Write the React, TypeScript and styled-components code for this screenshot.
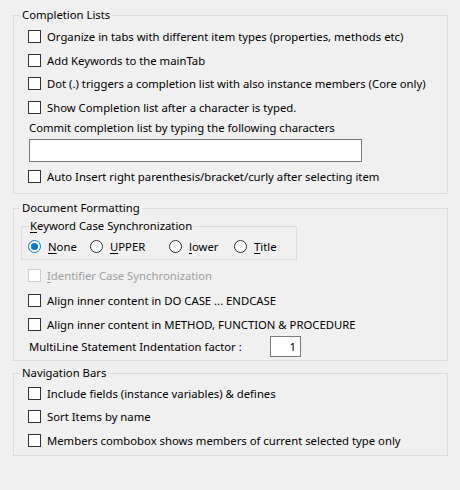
import React from 'react';
import styled, { createGlobalStyle } from 'styled-components';

const GlobalStyle = createGlobalStyle`
  html, body {
    margin: 0;
    padding: 0;
    background: #f0f0f0;
  }
  body {
    font-family: 'Noto Sans', 'Open Sans', sans-serif;
    font-size: 11.3px;
    color: #000;
  }
`;

const Page = styled.div`
  width: 460px;
  height: 490px;
  padding: 8px 12px 0 13px;
  box-sizing: border-box;
  display: flex;
  flex-direction: column;
`;

const Group = styled.fieldset<{ pad: string; top: number }>`
  margin: ${p => p.top}px 0 0 0;
  border: 1px solid #dcdcdc;
  padding: ${p => p.pad};
  display: flex;
  flex-direction: column;
  min-width: 0;
`;

const Legend = styled.legend`
  padding: 0 2px;
  margin-left: -8px;
  height: 14px;
  line-height: 14px;
`;

const InnerGroup = styled.fieldset`
  margin: 4px 0 0 -7px;
  width: 276px;
  box-sizing: border-box;
  border: 1px solid #dcdcdc;
  padding: 1px 0 1px 6px;
  display: flex;
  align-items: center;
`;

const InnerLegend = styled.legend`
  padding: 0 1px;
  margin-left: 1px;
  height: 14px;
  line-height: 14px;
`;

const Row = styled.label<{ h?: number; disabled?: boolean; top?: number }>`
  display: flex;
  align-items: center;
  height: ${p => p.h || 23.5}px;
  margin-top: ${p => p.top || 0}px;
  gap: 6px;
  color: ${p => (p.disabled ? '#a0a0a0' : '#000')};
  white-space: nowrap;
`;

const Box = styled.span<{ disabled?: boolean }>`
  width: 13px;
  height: 13px;
  box-sizing: border-box;
  border: 1px solid ${p => (p.disabled ? '#cccccc' : '#333333')};
  background: #fff;
  flex-shrink: 0;
`;

const RadioItem = styled.label<{ w?: number }>`
  display: flex;
  align-items: center;
  gap: 7px;
  width: ${p => (p.w ? `${p.w}px` : 'auto')};
  height: 24px;
`;

const Circle = styled.span<{ on?: boolean }>`
  width: 13px;
  height: 13px;
  box-sizing: border-box;
  border-radius: 50%;
  border: 1px solid ${p => (p.on ? '#0078d7' : '#333333')};
  background: #fff;
  display: flex;
  align-items: center;
  justify-content: center;
  flex-shrink: 0;
  &::after {
    content: '';
    display: ${p => (p.on ? 'block' : 'none')};
    width: 7px;
    height: 7px;
    border-radius: 50%;
    background: #0078d7;
  }
`;

const Key = styled.span`
  text-decoration: underline;
  text-underline-offset: 2px;
`;

const Caption = styled.div`
  padding-left: 1px;
  height: 16px;
  line-height: 16px;
  margin-top: 1px;
`;

const TextInput = styled.div`
  width: 333px;
  height: 23px;
  box-sizing: border-box;
  border: 1px solid #7a7a7a;
  background: #fff;
  margin: 3px 0 0 1px;
`;

const FactorRow = styled.div`
  display: flex;
  align-items: center;
  height: 21px;
  padding-left: 1px;
`;

const FactorLabel = styled.span`
  width: 241px;
`;

const NumberBox = styled.div`
  width: 31px;
  height: 21px;
  box-sizing: border-box;
  border: 1px solid #7a7a7a;
  background: #fff;
  text-align: right;
  padding-right: 4px;
  line-height: 19px;
`;

type CheckProps = {
  children: React.ReactNode;
  disabled?: boolean;
  h?: number;
  top?: number;
};

const Check: React.FC<CheckProps> = ({ children, disabled, h, top }) => (
  <Row disabled={disabled} h={h} top={top}>
    <Box disabled={disabled} />
    <span>{children}</span>
  </Row>
);

const App: React.FC = () => (
  <>
    <GlobalStyle />
    <Page>
      <Group pad="3px 0 5px 14px" top={0}>
        <Legend>Completion Lists</Legend>
        <Check>Organize in tabs with different item types (properties, methods etc)</Check>
        <Check>Add Keywords to the mainTab</Check>
        <Check>Dot (.) triggers a completion list with also instance members (Core only)</Check>
        <Check>Show Completion list after a character is typed.</Check>
        <Caption>Commit completion list by typing the following characters</Caption>
        <TextInput />
        <Check top={2.75}>Auto Insert right parenthesis/bracket/curly after selecting item</Check>
      </Group>

      <Group pad="0 0 3px 14px" top={7}>
        <Legend>Document Formatting</Legend>
        <InnerGroup>
          <InnerLegend>
            <Key>K</Key>eyword Case Synchronization
          </InnerLegend>
          <RadioItem w={62}>
            <Circle on />
            <span>
              <Key>N</Key>one
            </span>
          </RadioItem>
          <RadioItem w={79}>
            <Circle />
            <span>
              <Key>U</Key>PPER
            </span>
          </RadioItem>
          <RadioItem w={65}>
            <Circle />
            <span>
              <Key>l</Key>ower
            </span>
          </RadioItem>
          <RadioItem>
            <Circle />
            <span>
              <Key>T</Key>itle
            </span>
          </RadioItem>
        </InnerGroup>
        <Check disabled h={26} top={2}>
          <Key>I</Key>dentifier Case Synchronization
        </Check>
        <Check h={24}>Align inner content in DO CASE ... ENDCASE</Check>
        <Check h={24}>Align inner content in METHOD, FUNCTION &amp; PROCEDURE</Check>
        <FactorRow>
          <FactorLabel>MultiLine Statement Indentation factor :</FactorLabel>
          <NumberBox>1</NumberBox>
        </FactorRow>
      </Group>

      <Group pad="1px 0 3px 14px" top={5}>
        <Legend>Navigation Bars</Legend>
        <Check>Include fields (instance variables) &amp; defines</Check>
        <Check>Sort Items by name</Check>
        <Check>Members combobox shows members of current selected type only</Check>
      </Group>
    </Page>
  </>
);

export default App;
